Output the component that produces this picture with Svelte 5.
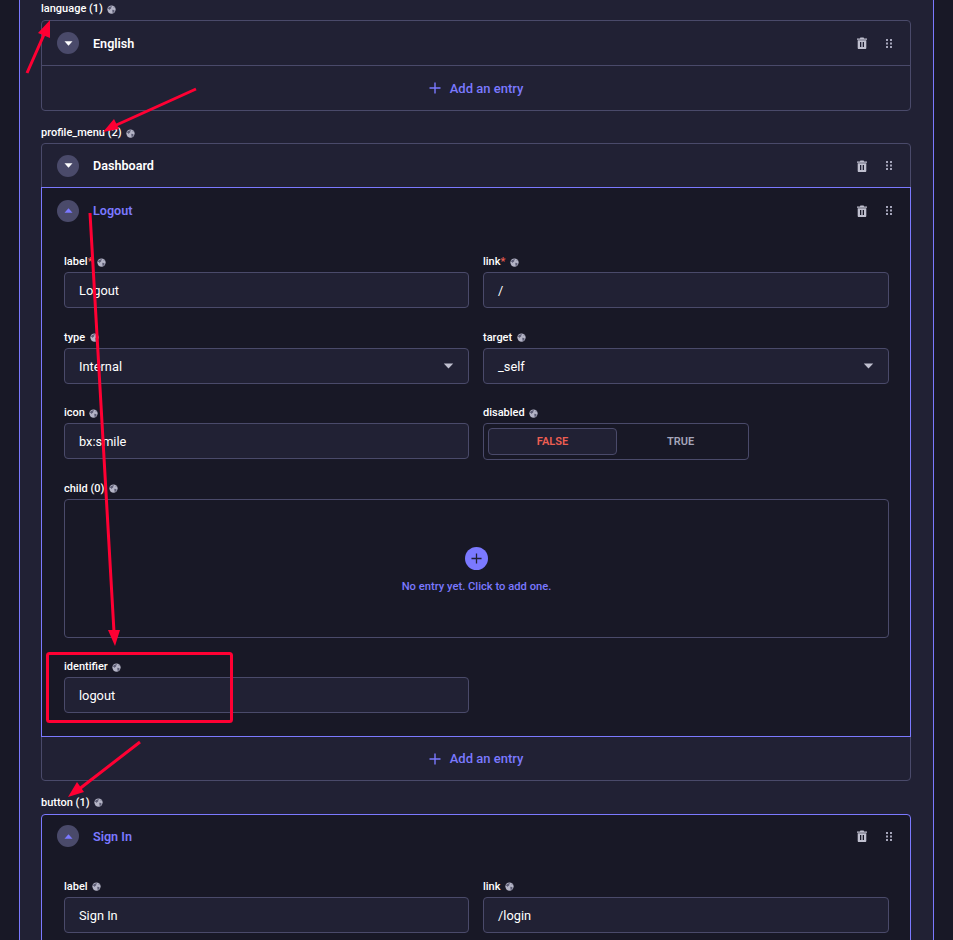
<script lang="ts">
	const menuFields = [
		{ label: 'label', required: true, value: 'Logout' },
		{ label: 'link', required: true, value: '/' },
		{ label: 'type', value: 'Internal', select: true },
		{ label: 'target', value: '_self', select: true }
	];
	const buttonFields = [
		{ label: 'label', value: 'Sign In' },
		{ label: 'link', value: '/login' }
	];
</script>

{#snippet globe()}
	<svg class="globe" viewBox="0 0 12 12" aria-hidden="true">
		<circle cx="6" cy="6" r="5.5" fill="#b4b4c6" />
		<path d="M2.2 3 4 2.2 6 1.4l.6 1.3L5 3.6l.8 1.2-1.5.4-.6 1.4L2.4 5.4 1.3 5zM7 6.2l2.4.4.9 1.4-1.5 2.3-1.2.4-.4-2.2zM8.6 1.9l1.6 1.5-1 .6z" fill="#5c5c74" />
	</svg>
{/snippet}

{#snippet caret(up: boolean)}
	<span class="toggle" class:open={up}>
		<svg viewBox="0 0 10 6" aria-hidden="true">
			{#if up}
				<path d="M0.2 5.8 5 0.2l4.8 5.6z" fill="#7b79ff" />
			{:else}
				<path d="M0.2 0.2 5 5.8l4.8-5.6z" fill="#ffffff" />
			{/if}
		</svg>
	</span>
{/snippet}

{#snippet actions()}
	<span class="actions">
		<svg class="trash" viewBox="0 0 10 12" aria-hidden="true">
			<path d="M3.4 0.4h3.2l.5 1H10v1.3H0V1.4h2.9zM0.7 3.3h8.6V11c0 .5-.4 1-1 1H1.7c-.6 0-1-.5-1-1zM3 5v5h1.3V5zm2.7 0v5H7V5z" fill-rule="evenodd" fill="#c0c0cf" />
		</svg>
		<svg class="drag" viewBox="0 0 6 9" aria-hidden="true">
			{#each [0, 3.5, 7] as y}
				<rect x="0" {y} width="2" height="2" fill="#a5a5ba" />
				<rect x="4" {y} width="2" height="2" fill="#a5a5ba" />
			{/each}
		</svg>
	</span>
{/snippet}

{#snippet header(title: string, open: boolean)}
	<div class="header" class:active={open}>
		{@render caret(open)}
		<span class="title">{title}</span>
		{@render actions()}
	</div>
{/snippet}

{#snippet addEntry()}
	<div class="add">
		<svg viewBox="0 0 12 12" aria-hidden="true">
			<path d="M6 0.5v11M0.5 6h11" stroke="#7b79ff" stroke-width="1.4" fill="none" />
		</svg>
		<span>Add an entry</span>
	</div>
{/snippet}

{#snippet fieldLabel(text: string, required = false)}
	<div class="label">
		<span>{text}</span>{#if required}<span class="req">*</span>{/if}
		{@render globe()}
	</div>
{/snippet}

{#snippet field(f: { label: string; value: string; required?: boolean; select?: boolean })}
	<div class="field">
		{@render fieldLabel(f.label, f.required)}
		<div class="input">
			<span>{f.value}</span>
			{#if f.select}
				<svg class="select-caret" viewBox="0 0 12 7" aria-hidden="true">
					<path d="M0.5 0.5h11L6 6.5z" fill="#c0c0cf" />
				</svg>
			{/if}
		</div>
	</div>
{/snippet}

<div class="page">
	<div class="panel">
		<section class="group">
			<div class="group-label">{@render fieldLabel('language (1)')}</div>
			<div class="list">
				{@render header('English', false)}
				{@render addEntry()}
			</div>
		</section>

		<section class="group">
			<div class="group-label low">{@render fieldLabel('profile_menu (2)')}</div>
			<div class="list">
				{@render header('Dashboard', false)}
				<div class="entry">
					{@render header('Logout', true)}
					<div class="grid">
						{#each menuFields as f}
							{@render field(f)}
						{/each}
						{@render field({ label: 'icon', value: 'bx:smile' })}
						<div class="field">
							{@render fieldLabel('disabled')}
							<div class="switch">
								<span class="on">FALSE</span>
								<span class="off">TRUE</span>
							</div>
						</div>
						<div class="field wide">
							{@render fieldLabel('child (0)')}
							<div class="empty">
								<span class="plus">
									<svg viewBox="0 0 12 12" aria-hidden="true">
										<path d="M6 0.5v11M0.5 6h11" stroke="#212134" stroke-width="1.4" fill="none" />
									</svg>
								</span>
								<span class="empty-text">No entry yet. Click to add one.</span>
							</div>
						</div>
						{@render field({ label: 'identifier', value: 'logout' })}
					</div>
				</div>
				{@render addEntry()}
			</div>
		</section>

		<section class="group">
			<div class="group-label">{@render fieldLabel('button (1)')}</div>
			<div class="list open-list">
				{@render header('Sign In', true)}
				<div class="grid">
					{#each buttonFields as f}
						{@render field(f)}
					{/each}
				</div>
			</div>
		</section>
	</div>

	<!-- annotations drawn on top of the screenshot -->
	<svg class="marks" viewBox="0 0 953 940" aria-hidden="true">
		<g stroke="#ff0033" stroke-width="3" fill="none">
			<path d="M27 73 46 30M196 89 112 127M90 213 114 632M140 742 78 790" />
			<rect x="47.5" y="653.5" width="184" height="68" rx="2" />
		</g>
		<g fill="#ff0033">
			<path d="M50 20 38 33 50 38zM103 132 114 119 119 129zM115 646 108 630 120 630zM68 797 77 782 84 792z" />
		</g>
	</svg>
</div>

<style>
	:global(body) {
		margin: 0;
		background: #181826;
	}

	.page {
		position: relative;
		height: 940px;
		overflow: hidden;
		padding: 0 19px;
		font-family: Roboto, 'Noto Sans', sans-serif;
		color: #ffffff;
		box-sizing: border-box;
	}

	.panel {
		width: 915px;
		height: 940px;
		box-sizing: border-box;
		border-left: 1px solid #7b79ff;
		border-right: 1px solid #7b79ff;
		background: #212134;
		padding: 1px 22px 0 21px;
	}

	.group {
		margin-bottom: 14px;
	}

	.group-label {
		height: 16px;
		margin-bottom: 3px;
	}

	.group-label.low {
		margin-bottom: 2px;
	}

	.label {
		display: flex;
		align-items: center;
		gap: 4px;
		height: 16px;
		font-size: 11px;
		font-weight: 500;
		line-height: 16px;
		white-space: nowrap;
	}

	.req {
		color: #ee5e52;
		margin-left: -4px;
	}

	.globe {
		width: 9px;
		height: 9px;
		margin-left: 0.5px;
	}

	.list {
		border: 1px solid #4a4a6a;
		border-radius: 4px;
	}

	.open-list {
		border-color: #7b79ff;
		background: #181826;
		border-radius: 4px 4px 0 0;
	}

	.header {
		display: flex;
		align-items: center;
		height: 44px;
		padding: 0 18px 0 15px;
	}

	.open-list .header,
	.list:has(.entry) > .header {
		height: 43px;
	}

	.entry .header {
		height: 45px;
	}

	.header.active .title {
		color: #7b79ff;
	}

	.toggle {
		display: flex;
		align-items: center;
		justify-content: center;
		width: 22px;
		height: 22px;
		border-radius: 50%;
		background: #4a4a6a;
	}

	.toggle svg {
		width: 9px;
		height: 5px;
	}

	.title {
		margin-left: 14px;
		font-size: 12.6px;
		font-weight: 600;
	}

	.actions {
		display: flex;
		align-items: center;
		gap: 19px;
		margin-left: auto;
	}

	.trash {
		width: 10px;
		height: 12px;
	}

	.drag {
		width: 6px;
		height: 9px;
	}

	.entry {
		margin: 0 -1px;
		border: 1px solid #7b79ff;
		background: #181826;
	}

	.add {
		display: flex;
		align-items: center;
		justify-content: center;
		gap: 9px;
		height: 44px;
		border-top: 1px solid #4a4a6a;
		color: #7b79ff;
		font-size: 13px;
		font-weight: 500;
	}

	.entry + .add {
		border-top: 0;
		height: 42px;
		padding-top: 1px;
	}

	.add svg {
		width: 12px;
		height: 12px;
	}

	.grid {
		display: grid;
		grid-template-columns: 405px 406px;
		gap: 21.6px 14px;
		padding: 21px 21px 22.6px 22px;
	}

	.field {
		display: flex;
		flex-direction: column;
		gap: 2px;
		min-width: 0;
	}

	.wide {
		grid-column: 1 / -1;
	}

	.input {
		display: flex;
		align-items: center;
		justify-content: space-between;
		height: 33px;
		box-sizing: content-box;
		padding: 1px 14px 0;
		border: 1px solid #4a4a6a;
		border-radius: 4px;
		background: #212134;
		font-size: 12.8px;
	}

	.select-caret {
		width: 11px;
		height: 6px;
	}

	.switch {
		display: flex;
		box-sizing: border-box;
		width: 266px;
		height: 37px;
		margin-bottom: -1px;
		padding: 4px;
		border: 1px solid #4a4a6a;
		border-radius: 4px;
		font-size: 11px;
		font-weight: 600;
	}

	.switch span {
		flex: 1;
		display: flex;
		align-items: center;
		justify-content: center;
		border-radius: 4px;
	}

	.on {
		border: 1px solid #4a4a6a;
		background: #212134;
		color: #ee5e52;
	}

	.off {
		color: #a5a5ba;
	}

	.empty {
		display: flex;
		flex-direction: column;
		align-items: center;
		box-sizing: border-box;
		height: 138.9px;
		padding-top: 47px;
		border: 1px solid #4a4a6a;
		border-radius: 4px;
		gap: 10px;
	}

	.plus {
		display: flex;
		align-items: center;
		justify-content: center;
		width: 23px;
		height: 23px;
		border-radius: 50%;
		background: #7b79ff;
	}

	.plus svg {
		width: 11px;
		height: 11px;
	}

	.empty-text {
		color: #7b79ff;
		font-size: 11.2px;
		font-weight: 500;
	}

	.marks {
		position: absolute;
		top: 0;
		left: 0;
		width: 953px;
		height: 940px;
		pointer-events: none;
	}
</style>
